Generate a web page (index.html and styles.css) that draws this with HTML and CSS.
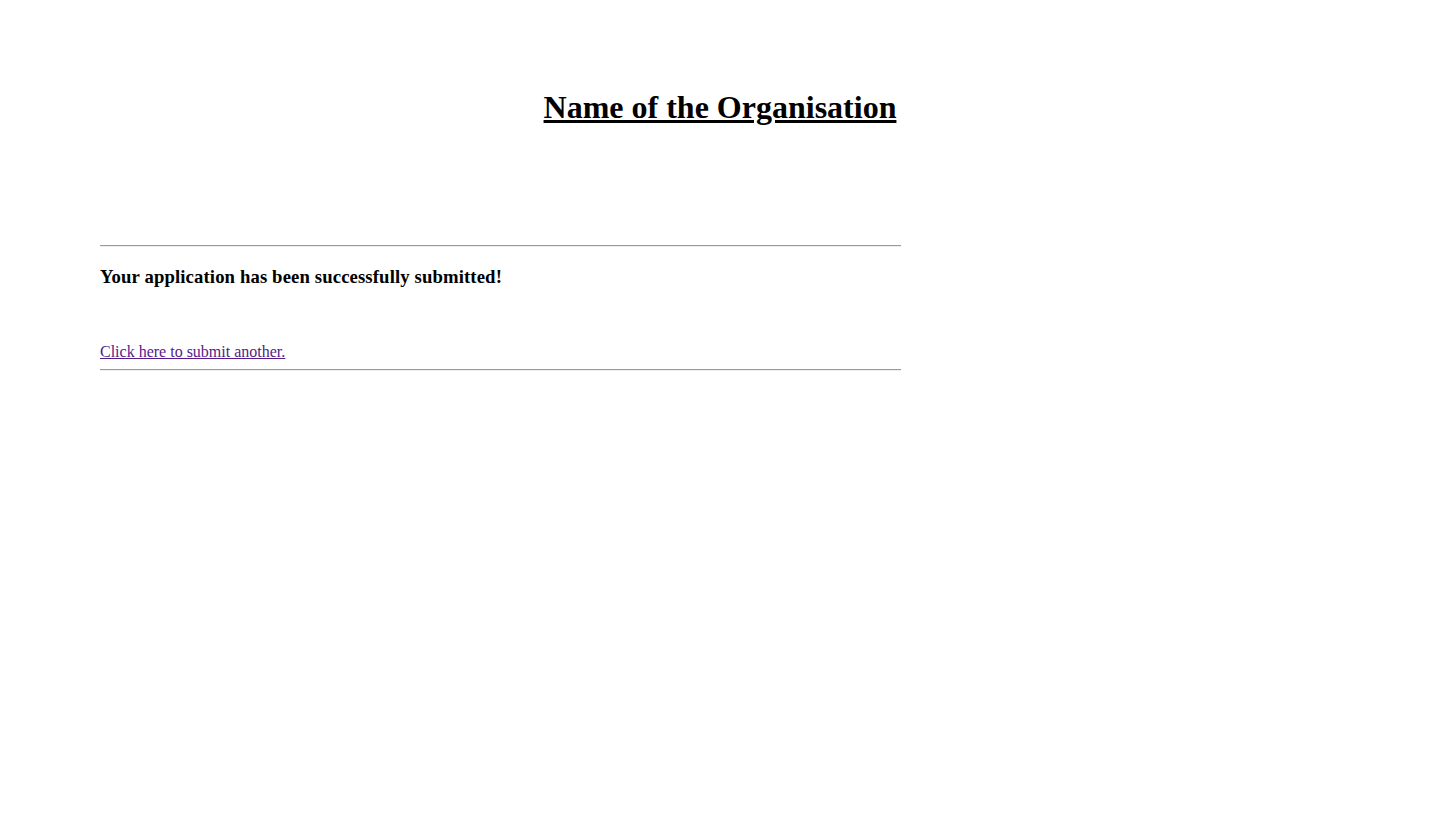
FILE: index.html
```html
<!DOCTYPE html>
<html>
<head>
<meta charset="utf-8">
<title>Application submitted</title>
<link rel="stylesheet" href="styles.css">
</head>
<body class="page">
<header class="masthead">
  <h1 class="org-title">Name of the Organisation</h1>
</header>
<main class="content">
  <hr class="rule">
  <h3 class="message">Your application has been successfully submitted!</h3>
  <div class="actions">
    <a class="again-link" href="#">Click here to submit another.</a>
  </div>
  <hr class="rule">
</main>
</body>
</html>
```
FILE: styles.css
```css
html, body {
  margin: 0;
  padding: 0;
  background: #ffffff;
}
.page {
  font-family: "Liberation Serif", "Times New Roman", serif;
  color: #000000;
  font-size: 16px;
}
.masthead {
  padding-top: 89px;
  height: 156px;
  box-sizing: border-box;
}
.org-title {
  margin: 0;
  font-size: 32px;
  font-weight: bold;
  text-align: center;
  text-decoration: underline;
  line-height: 37px;
}
.content {
  margin-left: 100px;
  width: 801px;
}
.rule {
  margin: 0;
  border: none;
  border-top: 1px solid #9a9a9a;
  border-bottom: 1px solid #eeeeee;
  height: 0;
}
.content > .rule:first-child {
  margin-top: 89px;
}
.message {
  margin: 19px 0 0 0;
  font-size: 18.72px;
  font-weight: bold;
  line-height: 22px;
  letter-spacing: 0.12px;
}
.actions {
  padding-top: 55px;
  padding-bottom: 8px;
  line-height: 18px;
}
.again-link {
  color: #551a8b;
  text-decoration: underline;
}
```
